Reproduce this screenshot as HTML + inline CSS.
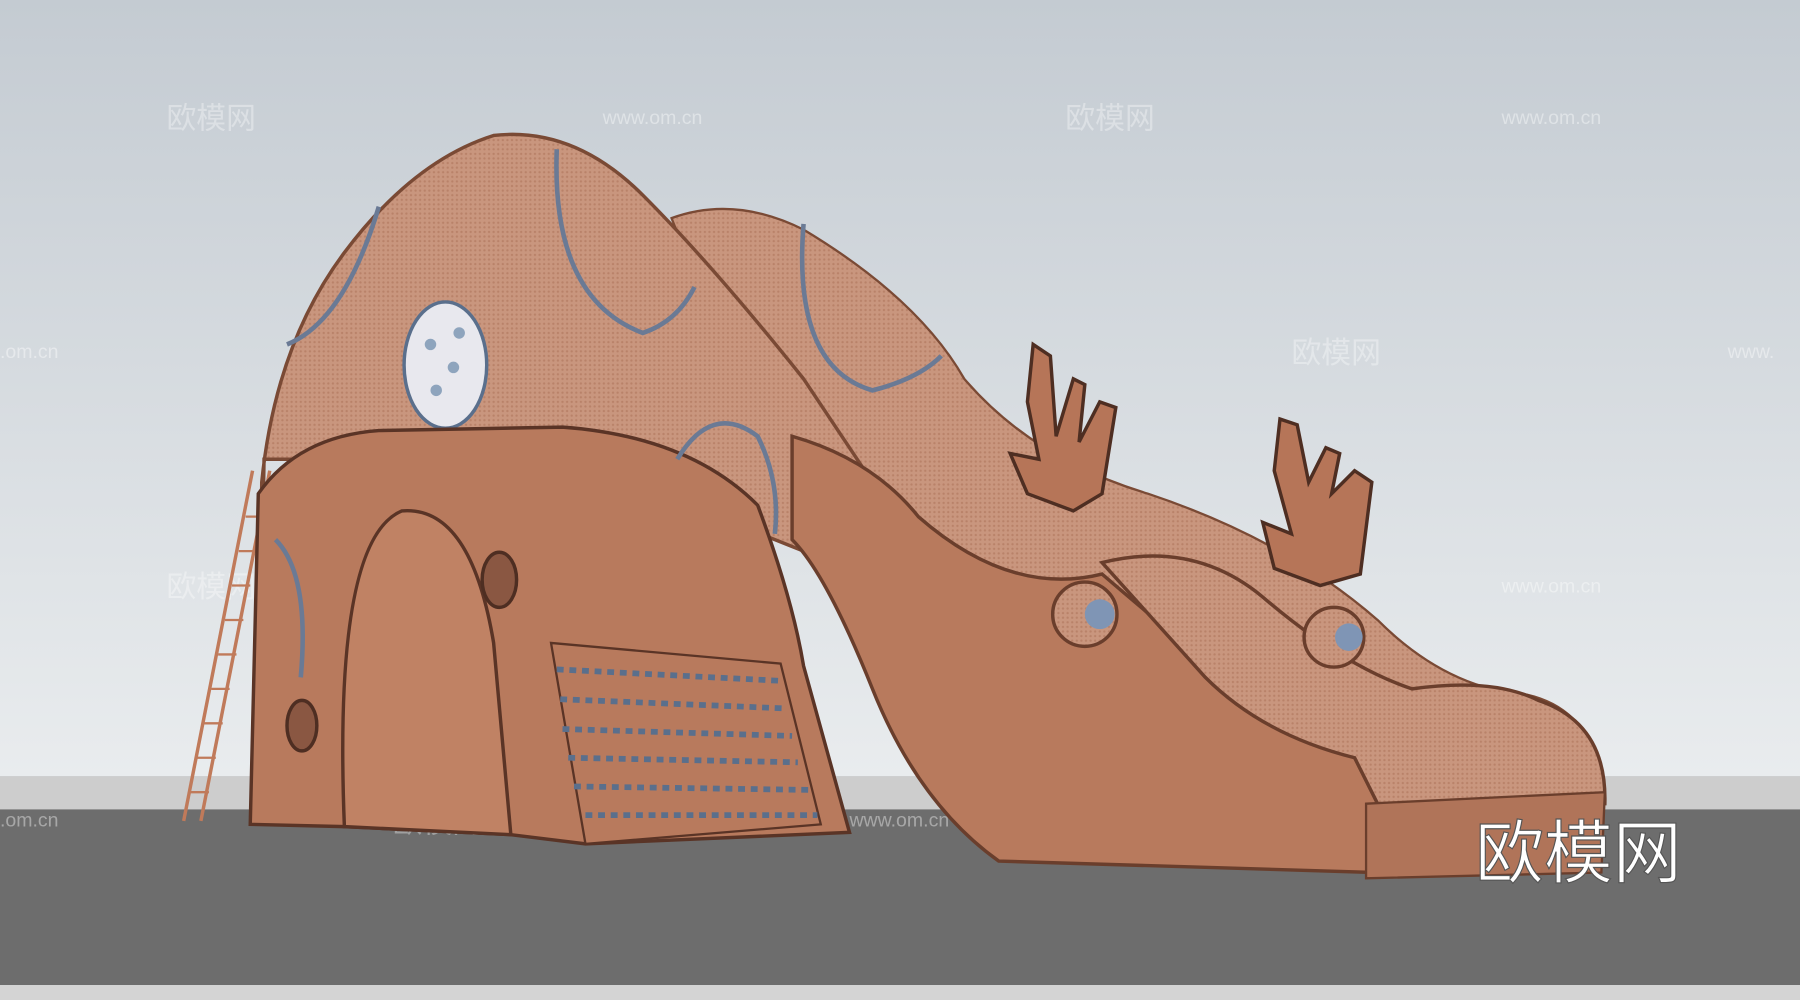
<!DOCTYPE html>
<html><head><meta charset="utf-8"><style>
html,body{margin:0;padding:0;width:1800px;height:1000px;overflow:hidden;background:#d8dde1}
svg{display:block}
</style></head><body>
<svg width="1800" height="1000" viewBox="0 0 1568 871" preserveAspectRatio="none" xmlns="http://www.w3.org/2000/svg">
<defs>
<linearGradient id="sky" x1="0" y1="0" x2="0" y2="1"><stop offset="0" stop-color="#c4cbd2"/><stop offset="1" stop-color="#e9ecee"/></linearGradient>
<pattern id="mesh" width="4" height="4" patternUnits="userSpaceOnUse"><rect width="4" height="4" fill="#c9967e"/><circle cx="2" cy="2" r="1" fill="#b98269"/></pattern>
</defs>
<rect width="1568" height="676" fill="url(#sky)"/>
<rect y="676" width="1568" height="30" fill="#cdcdcd"/>
<rect y="705" width="1568" height="153" fill="#6d6d6d"/>
<rect y="858" width="1568" height="13" fill="#d4d4d4"/>
<g font-family="'Liberation Sans','Noto Sans CJK SC',sans-serif" fill="#ffffff" fill-opacity="0.35" font-size="26">
<text x="145" y="112">欧模网</text><text x="928" y="112">欧模网</text><text x="1125" y="316">欧模网</text><text x="145" y="520">欧模网</text><text x="342" y="725">欧模网</text>
</g>
<g font-family="'Liberation Sans',sans-serif" fill="#ffffff" fill-opacity="0.4" font-size="17">
<text x="525" y="108">www.om.cn</text><text x="1308" y="108">www.om.cn</text><text x="0" y="312">.om.cn</text><text x="1505" y="312">www.</text><text x="525" y="516">www.om.cn</text><text x="1308" y="516">www.om.cn</text><text x="0" y="720">.om.cn</text><text x="740" y="720">www.om.cn</text>
</g>
<!-- ladder -->
<g stroke="#c07a5a" stroke-width="3"><line x1="160" y1="715" x2="220" y2="410"/><line x1="175" y1="715" x2="235" y2="410"/>
<g stroke-width="2"><line x1="166" y1="690" x2="182" y2="690"/><line x1="172" y1="660" x2="188" y2="660"/><line x1="178" y1="630" x2="194" y2="630"/><line x1="184" y1="600" x2="200" y2="600"/><line x1="190" y1="570" x2="206" y2="570"/><line x1="196" y1="540" x2="212" y2="540"/><line x1="202" y1="510" x2="218" y2="510"/><line x1="208" y1="480" x2="224" y2="480"/><line x1="214" y1="450" x2="230" y2="450"/></g></g>
<!-- slide back mesh -->
<path d="M585 190 Q640 170 700 200 Q800 260 840 330 Q900 400 1000 430 Q1120 470 1200 540 Q1260 600 1330 605 Q1395 620 1395 700 L1200 720 L900 700 L700 480 Z" fill="url(#mesh)" stroke="#7a4a35" stroke-width="2"/>
<!-- dome -->
<path d="M225 700 L228 420 Q240 300 300 220 Q360 140 430 118 Q500 110 560 170 Q620 230 700 330 L760 420 L700 480 L500 400 L230 400 Z" fill="url(#mesh)" stroke="#7a4a35" stroke-width="3"/>
<ellipse cx="388" cy="318" rx="36" ry="55" fill="#e8e8ee" stroke="#5a6f8c" stroke-width="3"/>
<g fill="#8ea4bd"><circle cx="375" cy="300" r="5"/><circle cx="395" cy="320" r="5"/><circle cx="380" cy="340" r="5"/><circle cx="400" cy="290" r="5"/></g>
<path d="M250 300 Q300 280 330 180" fill="none" stroke="#6a7a95" stroke-width="4"/>
<path d="M485 130 Q480 260 560 290 Q590 280 605 250" fill="none" stroke="#6a7a95" stroke-width="4"/>
<path d="M700 195 Q690 320 760 340 Q800 330 820 310" fill="none" stroke="#6a7a95" stroke-width="4"/>
<!-- slide trough -->
<path d="M690 380 Q760 400 800 450 Q880 520 960 500 Q1030 560 1080 600 Q1160 620 1200 660 L1200 760 L870 750 Q800 700 760 600 Q720 500 690 470 Z" fill="#b87a5d" stroke="#6a3e2c" stroke-width="3"/>
<path d="M960 490 Q1040 470 1100 520 Q1170 580 1230 600 Q1300 590 1340 610 Q1400 630 1398 700 L1200 700 L1180 660 Q1100 640 1050 590 Z" fill="url(#mesh)" stroke="#6a3e2c" stroke-width="3"/>
<path d="M1190 700 L1398 690 L1395 760 L1190 765 Z" fill="#b07459" stroke="#6a3e2c" stroke-width="2"/>
<circle cx="945" cy="535" r="28" fill="url(#mesh)" stroke="#6a3e2c" stroke-width="3"/><circle cx="958" cy="535" r="13" fill="#7f95b5"/>
<circle cx="1162" cy="555" r="26" fill="url(#mesh)" stroke="#6a3e2c" stroke-width="3"/><circle cx="1175" cy="555" r="12" fill="#7f95b5"/>
<!-- antlers -->
<path d="M900 300 L915 310 L920 380 L935 330 L945 335 L940 385 L958 350 L972 355 L960 430 L935 445 L895 430 L880 395 L905 400 L895 350 Z" fill="#b67558" stroke="#4e2e22" stroke-width="3"/>
<path d="M1115 365 L1130 370 L1140 420 L1155 390 L1167 395 L1160 430 L1180 410 L1195 420 L1185 500 L1150 510 L1110 495 L1100 455 L1125 465 L1110 410 Z" fill="#b67558" stroke="#4e2e22" stroke-width="3"/>
<!-- base house -->
<path d="M218 718 L225 430 Q260 380 330 375 L490 372 Q600 380 660 440 Q690 520 700 580 L740 725 L510 735 L445 727 L300 720 Z" fill="#b87a5d" stroke="#5a3426" stroke-width="3"/>
<path d="M300 720 Q290 470 350 445 Q410 440 430 560 L445 727 Z" fill="#c08264" stroke="#5a3426" stroke-width="3"/>
<path d="M480 560 L680 578 L715 718 L510 735 Z" fill="#b87a5d" stroke="#5a3426" stroke-width="2"/>
<g fill="none" stroke="#5a6f8c" stroke-width="5" stroke-dasharray="6 5">
<line x1="485" y1="583" x2="680" y2="593"/><line x1="488" y1="609" x2="684" y2="617"/><line x1="490" y1="635" x2="690" y2="641"/><line x1="495" y1="660" x2="695" y2="664"/><line x1="500" y1="685" x2="705" y2="688"/><line x1="510" y1="710" x2="712" y2="710"/></g>
<ellipse cx="435" cy="505" rx="15" ry="24" fill="#8a5742" stroke="#4e2e22" stroke-width="3"/>
<ellipse cx="263" cy="632" rx="13" ry="22" fill="#8a5742" stroke="#4e2e22" stroke-width="3"/>
<path d="M240 470 Q270 500 262 590" fill="none" stroke="#6a7a95" stroke-width="4"/>
<path d="M590 400 Q620 350 660 380 Q680 420 675 465" fill="none" stroke="#6a7a95" stroke-width="4"/>
<text x="1285" y="764" font-family="'Liberation Sans','Noto Sans CJK SC',sans-serif" font-size="60" fill="#ffffff" stroke="#555" stroke-width="1">欧模网</text>
</svg>
</body></html>
